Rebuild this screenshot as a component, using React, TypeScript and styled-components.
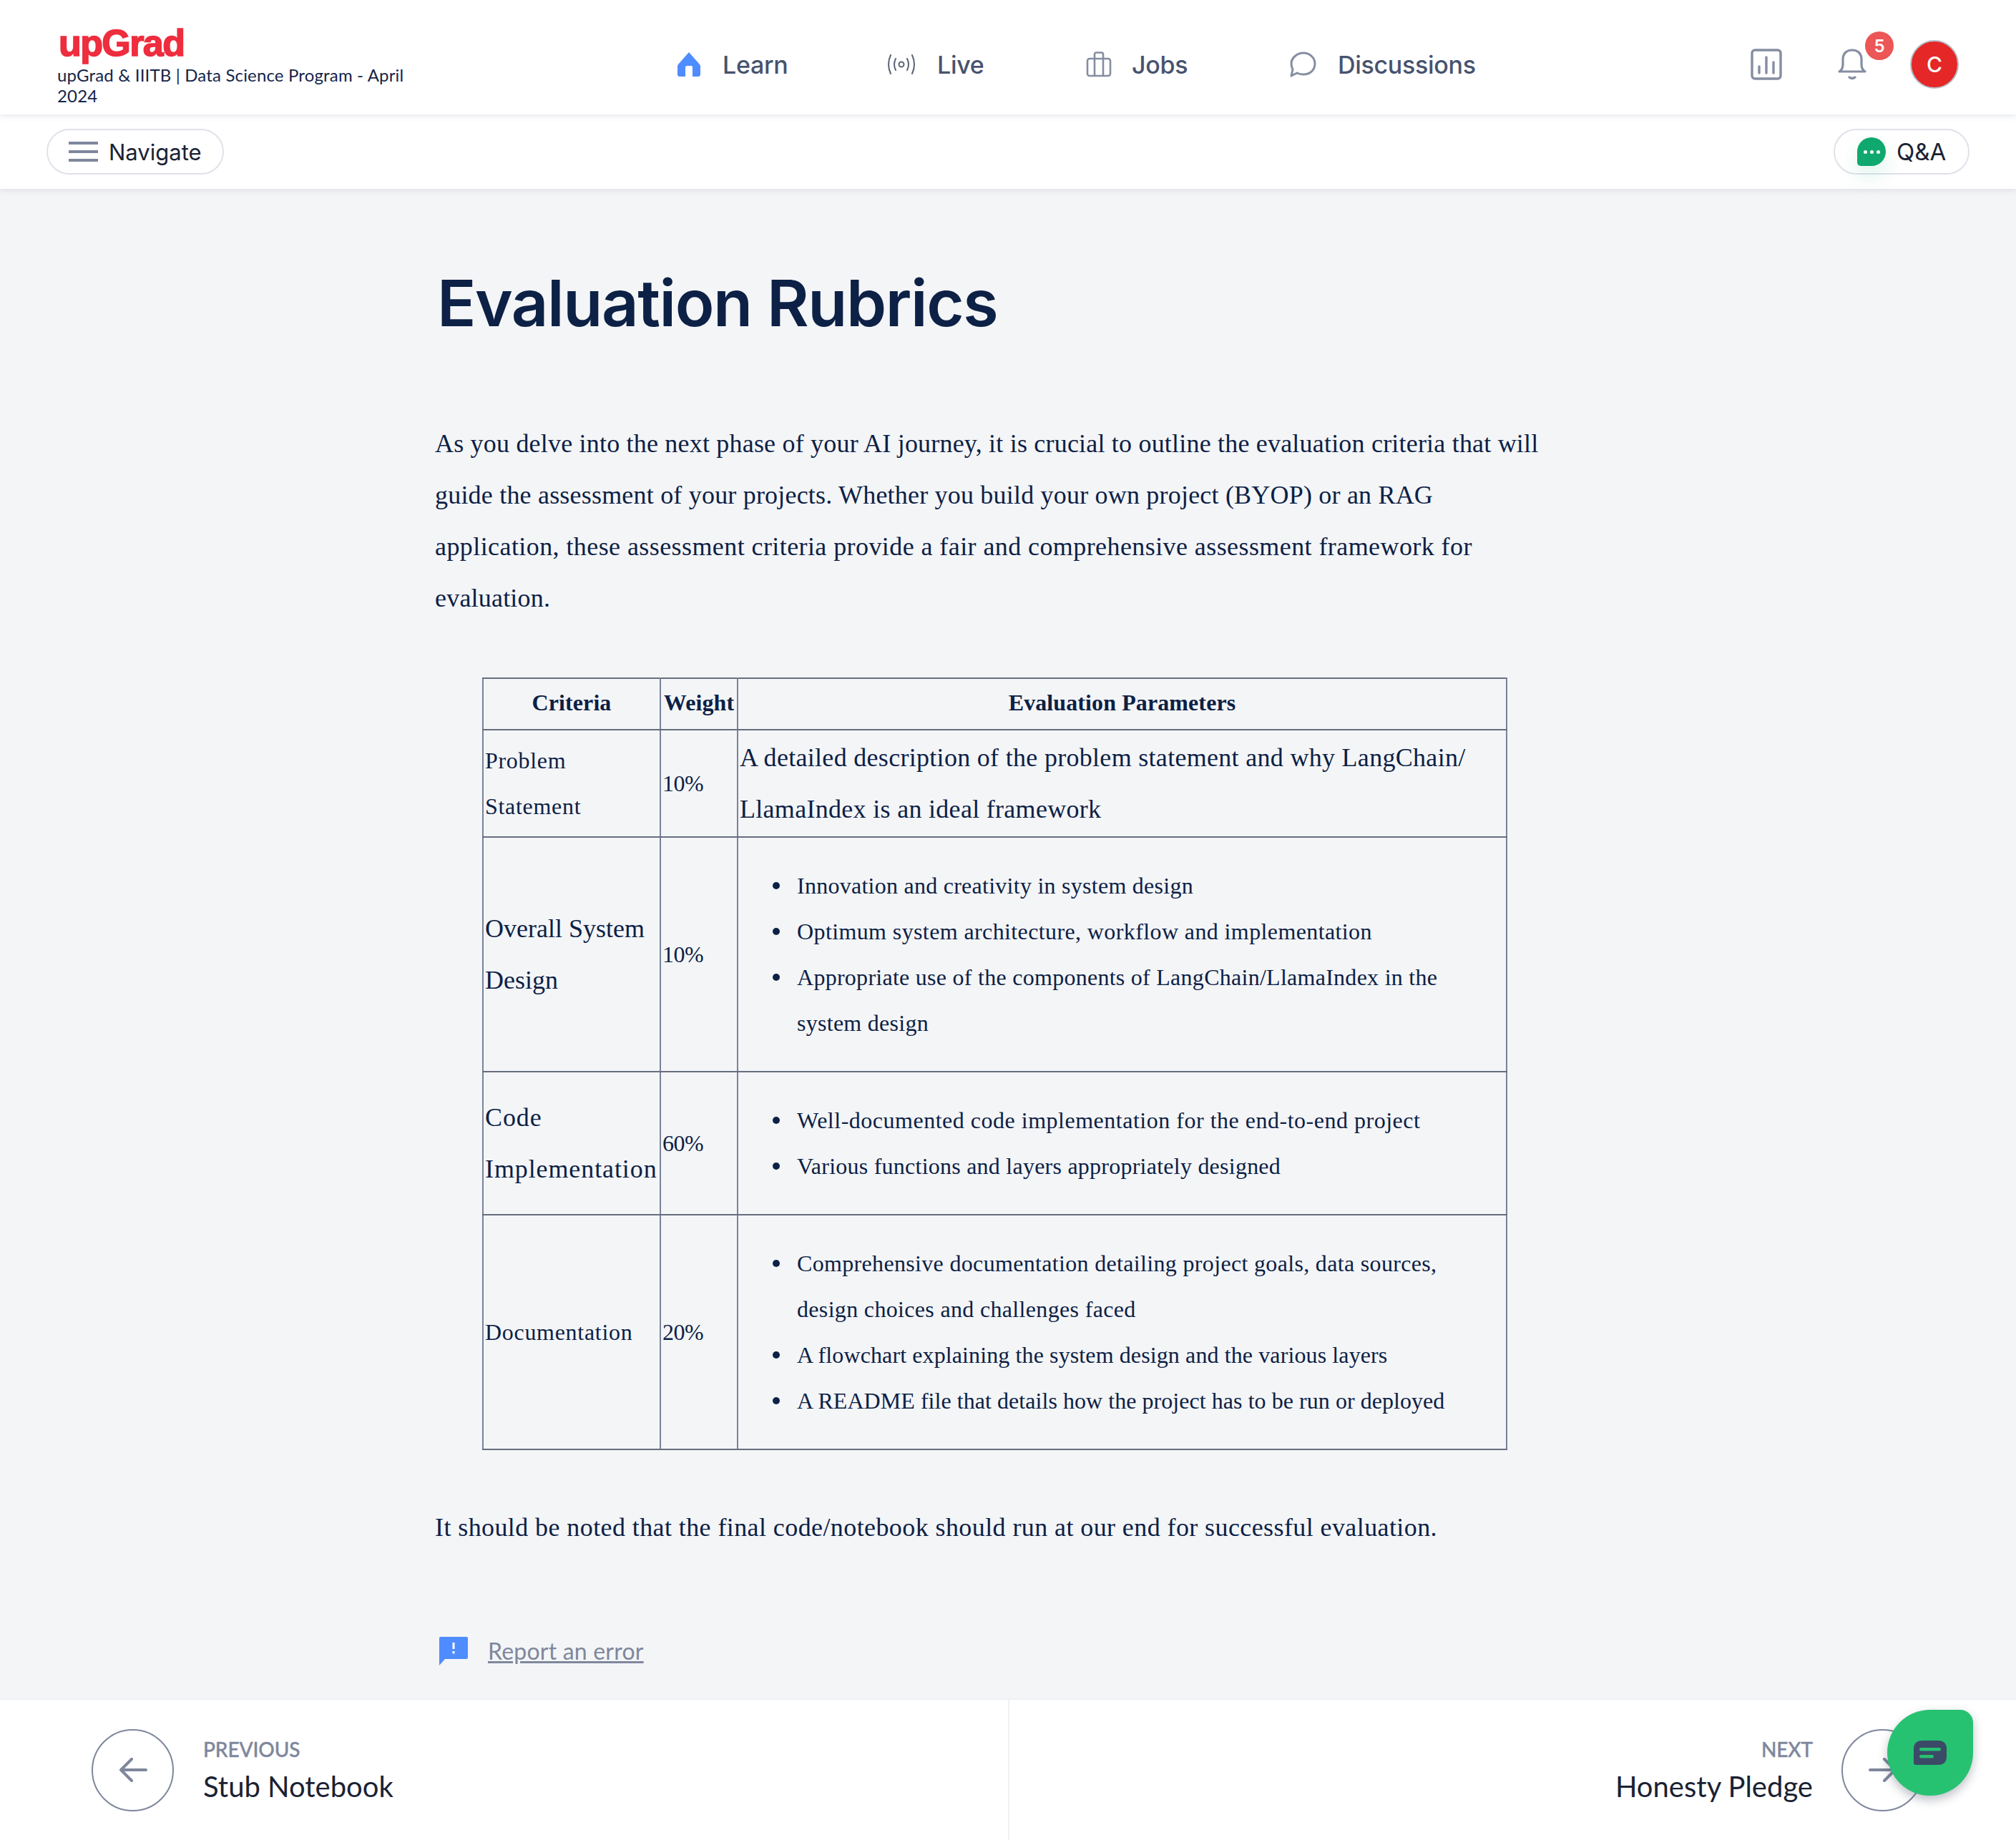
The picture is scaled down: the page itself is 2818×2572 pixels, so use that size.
import React from "react";
import styled, { createGlobalStyle } from "styled-components";

const Global = createGlobalStyle`
  html, body { margin: 0; padding: 0; background: #fff; }
  body { width: 2818px; height: 2572px; overflow: hidden; font-family: "Lato", "Liberation Sans", sans-serif; }
  * { box-sizing: border-box; }
`;

const SERIF = `"Liberation Serif", serif`;
const SANS = `"Lato", "Liberation Sans", sans-serif`;
const INK = "#0c2145";

const Page = styled.div`
  width: 2818px; height: 2572px; display: flex; flex-direction: column;
  background: #f4f5f7; position: relative; overflow: hidden;
`;
const Header = styled.header`
  height: 160px; background: #fff; display: flex; align-items: flex-start;
  padding-left: 80px; position: relative; z-index: 3;
  box-shadow: 0 2px 8px rgba(90, 100, 125, 0.16);
`;
const Brand = styled.div`
  width: 500px; padding-top: 33px; display: flex; flex-direction: column;
`;
const Logo = styled.div`
  font-family: "Liberation Sans", sans-serif; font-weight: 700; font-size: 52px; line-height: 54px;
  color: #ee2d3e; letter-spacing: -1.6px; margin-left: 2px; -webkit-text-stroke: 1.6px #ee2d3e;
`;
const Program = styled.div`
  font-family: ${SANS}; font-size: 24px; line-height: 29px; color: #14254a; margin-top: 3px; width: 490px; letter-spacing: 0.16px;
`;
const Nav = styled.nav`
  display: flex; margin-left: 367px; margin-top: 70px; height: 40px; align-items: center;
`;
const NavItem = styled.div<{ $w: number; $gap: number }>`
  display: flex; align-items: center; gap: ${(p) => p.$gap}px; width: ${(p) => p.$w}px;
  font-family: "Inter", ${SANS}; font-weight: 500; font-size: 34px; letter-spacing: -0.3px; color: #47536e;
`;
const Actions = styled.div`
  position: absolute; right: 80px; top: 44px; height: 80px; display: flex; align-items: flex-start;
`;
const IconSlot = styled.div<{ $ml: number; $mt: number }>`
  margin-left: ${(p) => p.$ml}px; margin-top: ${(p) => p.$mt}px; position: relative; display: flex;
`;
const Badge = styled.span`
  position: absolute; left: 38px; top: -24px; width: 40px; height: 40px; border-radius: 50%;
  background: #ec5656; color: #fff; font-family: "Inter", sans-serif; font-weight: 600; font-size: 24px;
  display: flex; align-items: center; justify-content: center;
`;
const Avatar = styled.div`
  width: 68px; height: 68px; margin-left: 61px; margin-top: 12px; border-radius: 50%; background: #e52727;
  border: 2px solid #b5bcc9; color: #fff; font-family: "Inter", sans-serif; font-size: 30px; font-weight: 500;
  display: flex; align-items: center; justify-content: center;
`;
const SubBar = styled.div`
  height: 104px; background: #fff; display: flex; align-items: center; justify-content: space-between;
  padding: 0 65px; position: relative; z-index: 2; box-shadow: 0 2px 8px rgba(90, 100, 125, 0.14);
`;
const Pill = styled.div<{ $w: number; $size: number }>`
  width: ${(p) => p.$w}px; height: 64px; border: 2px solid #e0e2e9; border-radius: 32px; display: flex; align-items: center;
  font-family: "Inter", ${SANS}; font-size: ${(p) => p.$size}px; color: #1a2233; position: relative; background: #fff;
`;
const Menu = styled.span`
  width: 41px; height: 28px; margin-left: 29px; margin-right: 15px; display: flex; flex-direction: column; justify-content: space-between;
  & > i { display: block; height: 4px; background: #7e879c; }
`;
const QaDot = styled.span`
  width: 40px; height: 40px; margin-left: 31px; margin-right: 15px; background: #0fa96f;
  border-radius: 50% 50% 50% 5px; display: flex; align-items: center; justify-content: center; gap: 4px;
  box-shadow: 0 14px 30px rgba(15, 169, 111, 0.14);
  & > i { width: 5px; height: 5px; border-radius: 50%; background: #fff; display: block; }
`;
const Main = styled.main`
  flex: 1; padding-left: 608px; width: 2200px; overflow: hidden;
`;
const Title = styled.h1`
  font-family: "Inter", ${SANS}; font-weight: 600; font-size: 90px; line-height: 110px; color: ${INK};
  margin: 105px 0 0 3px; letter-spacing: -1.4px;
`;
const Para = styled.p<{ $mt: number; $ls: number }>`
  font-family: ${SERIF}; font-size: 36px; line-height: 72px; color: ${INK}; margin: ${(p) => p.$mt}px 0 0; width: 1560px;
  letter-spacing: ${(p) => p.$ls}px;
`;
const Stretched = styled.span`
  letter-spacing: 0.42px;
`;
const Table = styled.table`
  border-collapse: collapse; table-layout: fixed; width: 1433px; margin: 75px 0 0 66px; font-family: ${SERIF}; color: ${INK};
`;
const Th = styled.th`
  border-style: solid; border-width: 2px; border-color: #666d7e #78829a; height: 72px; padding: 0 2px 3px; font-size: 32px; font-weight: 700; text-align: center; letter-spacing: 0.1px;
`;
const Td = styled.td<{ $size: number; $ls?: number }>`
  border-style: solid; border-width: 2px; border-color: #666d7e #78829a; padding: 2px 2px; vertical-align: middle; font-size: ${(p) => p.$size}px;
  line-height: ${(p) => (p.$size === 36 ? 72 : 64)}px; letter-spacing: ${(p) => p.$ls ?? 0}px;
`;
const Bullets = styled.ul`
  margin: 33px 0; padding: 0 40px 0 80px; font-size: 32px; line-height: 64px; list-style: none;
`;
const Item = styled.li<{ $ls: number }>`
  position: relative; letter-spacing: ${(p) => p.$ls}px;
  &::before {
    content: ""; position: absolute; left: -34px; top: 27px; width: 10px; height: 10px; border-radius: 50%; background: ${INK};
  }
`;
const Report = styled.div`
  display: flex; align-items: flex-start; gap: 28px; margin: 117px 0 0 6px;
  font-family: ${SANS}; font-size: 32px; color: #7e879c; text-decoration: underline; line-height: 40px; letter-spacing: 0.2px;
`;
const Footer = styled.footer`
  height: 196px; background: #fff; display: grid; grid-template-columns: 1411px 1fr; box-shadow: 0 -1px 2px rgba(90,100,125,.06);
  position: relative;
`;
const Side = styled.div<{ $end?: boolean }>`
  display: flex; align-items: center; padding: ${(p) => (p.$end ? "0 129px 0 0" : "0 0 0 128px")}; gap: ${(p) => (p.$end ? 40 : 41)}px; justify-content: ${(p) => (p.$end ? "flex-end" : "flex-start")};
  border-right: ${(p) => (p.$end ? "none" : "2px solid #f0f1f4")};
`;
const Circle = styled.div`
  width: 115px; height: 115px; border-radius: 50%; border: 2px solid #7e879c; display: flex; align-items: center; justify-content: center; background: #fff;
`;
const Labels = styled.div<{ $end?: boolean }>`
  display: flex; flex-direction: column; text-align: ${(p) => (p.$end ? "right" : "left")};
`;
const Small = styled.span`
  font-family: ${SANS}; font-size: 28px; line-height: 36px; color: #7e879c; font-weight: 500; letter-spacing: -0.1px; -webkit-text-stroke: 0.4px #7e879c;
`;
const Name = styled.span`
  font-family: ${SANS}; font-size: 40px; line-height: 50px; margin-top: 9px; color: #1a2233;
`;
const Chat = styled.div`
  position: absolute; left: 2638px; top: 2390px; width: 120px; height: 120px; background: #26c271; z-index: 5;
  border-radius: 50% 18px 50% 50%; display: flex; align-items: center; justify-content: center;
  box-shadow: 0 6px 14px rgba(40, 50, 70, 0.3);
`;

const HomeIcon = () => (
  <svg width="32" height="34" viewBox="0 0 32 34"><path fill="#4f8cff" d="M16 0 L31 17 Q32 18 32 20 V31 Q32 34 29 34 H21 V21 Q21 19 19 19 H13 Q11 19 11 21 V34 H3 Q0 34 0 31 V20 Q0 18 1 17 Z" /></svg>
);
const LiveIcon = () => (
  <svg width="40" height="28" viewBox="0 0 40 28" fill="none" stroke="#5a6478" strokeWidth="2" strokeLinecap="round">
    <circle cx="20" cy="14" r="3.5" />
    <path d="M12 6 Q8 14 12 22 M28 6 Q32 14 28 22 M5 1 Q-1 14 5 27 M35 1 Q41 14 35 27" />
  </svg>
);
const JobsIcon = () => (
  <svg width="36" height="36" viewBox="0 0 36 36" fill="none" stroke="#858da1" strokeWidth="2.6" strokeLinejoin="round">
    <rect x="2" y="10" width="32" height="24" rx="3" />
    <path d="M12 34 V10 M24 34 V10 M12 10 V4 Q12 1.5 14.5 1.5 H21.5 Q24 1.5 24 4 V10" />
  </svg>
);
const ChatIcon = () => (
  <svg width="37" height="36" viewBox="0 0 37 36" fill="none" stroke="#858da1" strokeWidth="3" strokeLinejoin="round">
    <path d="M19 2 C28 2 35 9 35 17 C35 26 28 32 19 32 C15 32 12 31 10 30 L2 34 L4 25 C2.5 22 2 20 2 17 C2 9 10 2 19 2 Z" />
  </svg>
);
const StatsIcon = () => (
  <svg width="44" height="44" viewBox="0 0 44 44" fill="none" stroke="#858da1" strokeWidth="3.4" strokeLinecap="round">
    <rect x="2" y="2" width="40" height="40" rx="4" />
    <path d="M12 25 V34 M22 12 V34 M32 19 V34" />
  </svg>
);
const BellIcon = () => (
  <svg width="40" height="44" viewBox="0 0 40 44" fill="none" stroke="#858da1" strokeWidth="3.2" strokeLinejoin="round" strokeLinecap="round">
    <path d="M2 32 Q7 29 7 22 V15 C7 7 12 2 20 2 C28 2 33 7 33 15 V22 Q33 29 38 32 Z" />
    <path d="M16 40 Q20 43 24 40" />
  </svg>
);
const ErrorIcon = () => (
  <svg width="40" height="40" viewBox="0 0 40 40"><path fill="#4f8cff" d="M2 0 H38 Q40 0 40 2 V29 Q40 31 38 31 H8 L0 40 V2 Q0 0 2 0 Z" /><rect x="18.5" y="8" width="3" height="9" fill="#fff" /><rect x="18.5" y="20" width="3" height="3.5" fill="#fff" /></svg>
);
const Arrow = ({ flip }: { flip?: boolean }) => (
  <svg width="40" height="34" viewBox="0 0 40 34" fill="none" stroke="#7e879c" strokeWidth="4" strokeLinecap="round" strokeLinejoin="round" style={flip ? { transform: "scaleX(-1)" } : undefined}>
    <path d="M3 17 H38 M18 2 L3 17 L18 32" />
  </svg>
);
const ChatBubble = () => (
  <svg width="46" height="34" viewBox="0 0 46 34"><path fill="#3b4a66" d="M12 0 H34 Q46 0 46 12 V22 Q46 34 34 34 H3 Q0 34 0 31 V12 Q0 0 12 0 Z" /><rect x="8" y="10" width="30" height="4.5" rx="2.2" fill="#26c271" /><rect x="8" y="20" width="20" height="4.5" rx="2.2" fill="#26c271" /></svg>
);

export default function App() {
  return (
    <Page>
      <Global />
      <Header>
        <Brand>
          <Logo>upGrad</Logo>
          <Program>upGrad &amp; IIITB | Data Science Program - April 2024</Program>
        </Brand>
        <Nav>
          <NavItem $w={293} $gap={31}><HomeIcon />Learn</NavItem>
          <NavItem $w={278} $gap={30}><LiveIcon />Live</NavItem>
          <NavItem $w={285} $gap={28}><JobsIcon />Jobs</NavItem>
          <NavItem $w={270} $gap={30}><ChatIcon />Discussions</NavItem>
        </Nav>
        <Actions>
          <IconSlot $ml={0} $mt={24}><StatsIcon /></IconSlot>
          <IconSlot $ml={78} $mt={24}><BellIcon /><Badge>5</Badge></IconSlot>
          <Avatar>C</Avatar>
        </Actions>
      </Header>
      <SubBar>
        <Pill $w={248} $size={31}><Menu><i /><i /><i /></Menu>Navigate</Pill>
        <Pill $w={190} $size={33}><QaDot><i /><i /><i /></QaDot>Q&amp;A</Pill>
      </SubBar>
      <Main>
        <Title>Evaluation Rubrics</Title>
        <Para $mt={105} $ls={0.2}>
          As you delve into the next phase of your AI journey, it is crucial to outline the evaluation criteria that will guide the assessment of your projects. Whether you build your own project (BYOP) or an RAG <Stretched>application, these assessment criteria provide a fair and comprehensive assessment framework for</Stretched> evaluation.
        </Para>
        <Table>
          <colgroup><col width="248" /><col width="108" /><col /></colgroup>
          <thead>
            <tr><Th>Criteria</Th><Th>Weight</Th><Th>Evaluation Parameters</Th></tr>
          </thead>
          <tbody>
            <tr>
              <Td $size={32} $ls={0.7}>Problem Statement</Td>
              <Td $size={32} $ls={-0.5}>10%</Td>
              <Td $size={36} $ls={0.3}>A detailed description of the problem statement and why LangChain/ LlamaIndex is an ideal framework</Td>
            </tr>
            <tr>
              <Td $size={36}>Overall System Design</Td>
              <Td $size={32} $ls={-0.5}>10%</Td>
              <Td $size={32}>
                <Bullets>
                  <Item $ls={0.26}>Innovation and creativity in system design</Item>
                  <Item $ls={0.39}>Optimum system architecture, workflow and implementation</Item>
                  <Item $ls={0.27}>Appropriate use of the components of LangChain/LlamaIndex in the system design</Item>
                </Bullets>
              </Td>
            </tr>
            <tr>
              <Td $size={36} $ls={0.9}>Code Implementation</Td>
              <Td $size={32} $ls={-0.5}>60%</Td>
              <Td $size={32}>
                <Bullets>
                  <Item $ls={0.51}>Well-documented code implementation for the end-to-end project</Item>
                  <Item $ls={0.24}>Various functions and layers appropriately designed</Item>
                </Bullets>
              </Td>
            </tr>
            <tr>
              <Td $size={32} $ls={0.7}>Documentation</Td>
              <Td $size={32} $ls={-0.5}>20%</Td>
              <Td $size={32}>
                <Bullets>
                  <Item $ls={0.33}>Comprehensive documentation detailing project goals, data sources, design choices and challenges faced</Item>
                  <Item $ls={0.11}>A flowchart explaining the system design and the various layers</Item>
                  <Item $ls={0.05}>A README file that details how the project has to be run or deployed</Item>
                </Bullets>
              </Td>
            </tr>
          </tbody>
        </Table>
        <Para $mt={72} $ls={0.41}>It should be noted that the final code/notebook should run at our end for successful evaluation.</Para>
        <Report><ErrorIcon />Report an error</Report>
      </Main>
      <Footer>
        <Side>
          <Circle><Arrow /></Circle>
          <Labels><Small>PREVIOUS</Small><Name>Stub Notebook</Name></Labels>
        </Side>
        <Side $end>
          <Labels $end><Small>NEXT</Small><Name>Honesty Pledge</Name></Labels>
          <Circle><Arrow flip /></Circle>
        </Side>
      </Footer>
      <Chat><ChatBubble /></Chat>
    </Page>
  );
}
